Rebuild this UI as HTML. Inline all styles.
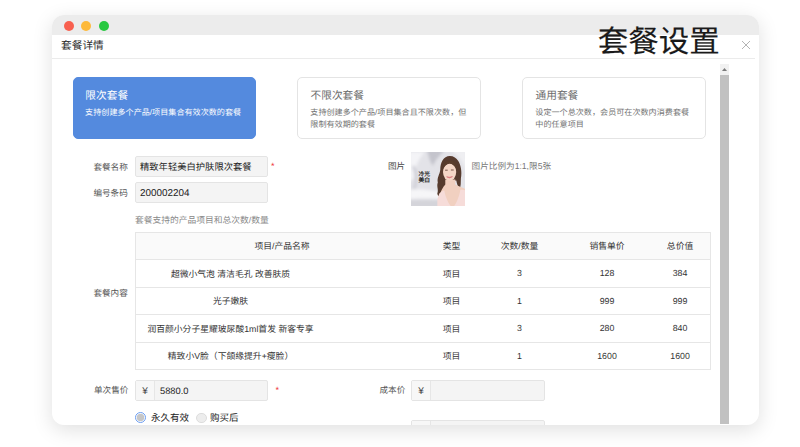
<!DOCTYPE html>
<html lang="zh-CN"><head><meta charset="utf-8">
<style>
*{box-sizing:border-box;margin:0;padding:0}
html,body{text-rendering:geometricPrecision;width:800px;height:447px;overflow:hidden;background:#fff;font-family:"Liberation Sans",sans-serif;color:#333}
.win{position:absolute;left:52px;top:15px;width:707.3px;height:409.6px;background:#fff;border-radius:12px;box-shadow:0 5px 20px rgba(0,0,0,.125);overflow:hidden}
.tb{position:absolute;left:0;top:0;width:100%;height:20px;background:#ececec}
.dot{position:absolute;top:6px;width:10px;height:10px;border-radius:50%}
.abs{position:absolute;white-space:nowrap}
.hdr{position:absolute;left:0;top:20px;width:703px;height:24px;border-bottom:1px solid #ebebeb}
.card{position:absolute;top:62px;height:62px;border-radius:5px;border:1px solid #e4e4e4;background:#fff}
.card h4{position:absolute;left:12.5px;top:9.5px;font-size:10.7px;font-weight:normal;color:#6c6c6c;white-space:nowrap}
.card p{position:absolute;left:12.3px;top:29px;font-size:8.1px;line-height:11.5px;color:#727272;white-space:nowrap}
.card.on{background:#548ade;border-color:#548ade}
.card.on h4,.card.on p{color:#fff;margin-left:-1.2px}
.lbl{position:absolute;margin-left:-1.2px;margin-top:-.5px;font-size:8.6px;color:#555;text-align:right;width:60px;white-space:nowrap}
.inp{position:absolute;height:21px;background:#f4f4f4;border:1px solid #e4e4e4;border-radius:2px;font-size:9.3px;line-height:21px;padding-left:4px;color:#222;white-space:nowrap}
table{position:absolute;left:83px;top:217px;width:575.6px;border-collapse:collapse;font-size:8.8px;color:#333;table-layout:fixed}
td:first-child{padding-right:103px}
td,th{border-top:1px solid #e6e6e6;border-bottom:1px solid #e6e6e6;height:27.45px;padding-bottom:.6px;text-align:center;font-weight:normal;white-space:nowrap}
table{border:1px solid #e6e6e6}
th{background:#fafafa}
</style></head><body>
<div class="win">
 <div class="tb">
  <div class="dot" style="left:12px;background:#f8604f"></div>
  <div class="dot" style="left:29px;background:#fdb93a"></div>
  <div class="dot" style="left:46.5px;background:#28c840"></div>
 </div>
 <div class="hdr"></div>
 <div class="abs" style="left:9px;top:23.2px;font-size:10.7px;color:#2a2a2a">套餐详情</div>
 <div class="abs" style="left:545.7px;top:6.8px;font-size:30.5px;color:#1a1a1a;line-height:40px;-webkit-text-stroke:.12px #1a1a1a">套餐设置</div>
 <svg class="abs" style="left:689px;top:25px" width="10" height="10" viewBox="0 0 10 10"><path d="M1 1L9 9M9 1L1 9" stroke="#b4b4b4" stroke-width="1" fill="none"/></svg>

 <!-- scrollbar -->
 <div class="abs" style="left:668px;top:49px;width:9px;height:360px;background:#f1f1f1"></div>
 <div class="abs" style="left:668px;top:60px;width:9px;height:349px;background:#c1c1c1"></div>
 <svg class="abs" style="left:668px;top:49px" width="9" height="11" viewBox="0 0 9 11"><path d="M2 7L4.5 4L7 7Z" fill="#7a7a7a"/></svg>

 <div class="card on" style="left:21px;width:183px">
   <h4>限次套餐</h4><p>支持创建多个产品/项目集合有效次数的套餐</p></div>
 <div class="card" style="left:245px;width:184px">
   <h4>不限次套餐</h4><p>支持创建多个产品/项目集合且不限次数，但<br>限制有效期的套餐</p></div>
 <div class="card" style="left:470px;width:184px">
   <h4>通用套餐</h4><p>设定一个总次数，会员可在次数内消费套餐<br>中的任意项目</p></div>

 <div class="lbl" style="left:17px;top:146px">套餐名称</div>
 <div class="inp" style="left:83px;top:140.5px;width:133px">精致年轻美白护肤限次套餐</div>
 <div class="abs" style="left:219px;top:146px;font-size:9px;color:#e33">*</div>
 <div class="lbl" style="left:17px;top:172px">编号条码</div>
 <div class="inp" style="left:83px;top:166.8px;width:133px;font-size:9.9px">200002204</div>
 <div class="abs" style="left:83px;top:197.7px;font-size:8.75px;color:#888">套餐支持的产品项目和总次数/数量</div>

 <div class="lbl" style="left:294.3px;top:145.2px;color:#444">图片</div>
 <svg class="abs" style="left:359px;top:137px" width="54" height="54" viewBox="0 0 54 54">
  <defs><filter id="bl" x="-10%" y="-10%" width="120%" height="120%"><feGaussianBlur stdDeviation="0.7"/></filter>
  <filter id="bl2" x="-20%" y="-20%" width="140%" height="140%"><feGaussianBlur stdDeviation="1.6"/></filter>
  <clipPath id="cp"><rect width="54" height="54"/></clipPath></defs>
  <g clip-path="url(#cp)">
  <rect width="54" height="54" fill="#e3e3e8"/>
  <g filter="url(#bl2)">
   <path d="M-2 0H14C8 6 4 14 3 26L-2 30Z" fill="#f4f4f7"/>
   <path d="M16 -2H34C30 2 24 8 22 14C18 8 18 4 16 -2Z" fill="#c4c4cc"/>
   <path d="M40 -2H56V24C54 12 48 4 40 -2Z" fill="#efeff2"/>
   <path d="M-2 38C8 36 18 38 30 40V47C18 46 8 46 -2 47Z" fill="#f6f6f8"/>
   <path d="M-2 48H30V56H-2Z" fill="#d4d4da"/>
   <path d="M2 14C6 20 6 30 3 37" stroke="#d0d0d8" stroke-width="3" fill="none"/>
  </g>
  <g filter="url(#bl)" transform="translate(1.3,1.6)">
   <!-- hair -->
   <path d="M37.5 2.5C31 2.5 28 9 28 16C27.5 21 24.5 24 25.5 29C24 33 26.5 36 25 40C25.5 43.5 29 44.5 31.5 42C33 36 34 31 35 28L44 27C44.5 30 45.5 33 47 35.5C49 32.5 48.3 29 48.6 25C49.8 19 48.8 12 46 7.5C44 4.5 41.5 2.5 37.5 2.5Z" fill="#573b2d"/>
   <!-- neck/chest -->
   <path d="M33 26H43V31C46 33 51 34 54 36V54H27V44C28 38 31 33 33 31Z" fill="#f1d0c0"/>
   <!-- face -->
   <ellipse cx="37.3" cy="18.5" rx="6.6" ry="8.6" fill="#f4d6c6"/>
   <path d="M30.5 16C31 10 35 7 39 7.5C42 8 44 11 44.5 15C42 12 40 10 37 10C34 10.5 32 13 30.5 16Z" fill="#5a3d2d"/>
   <path d="M34.3 23.2Q37 25.6 40.2 23Q37.2 24 34.3 23.2Z" fill="#d9747a" stroke="#d9747a" stroke-width=".6"/>
   <path d="M32.8 16.6h2.6M38.6 16.4h2.8" stroke="#6a4a3c" stroke-width=".9"/>
   <!-- dress -->
   <path d="M27 40C29 38 31 37 32 37C33 43 36 50 39.5 54H25V46Z" fill="#f6dcd9"/>
   <path d="M54 37C51 36 49 36 48 36.5C47 43 44 50 41 54H54Z" fill="#f6dcd9"/>
  </g>
  <g font-family="'Liberation Sans',sans-serif" font-weight="bold" font-size="5.8" fill="#1e1e22"><text x="7.4" y="23.8">冷光</text><text x="7.4" y="29.9">美白</text></g>
  </g>
 </svg>
 <div class="abs" style="left:419.5px;top:144.8px;font-size:8.65px;color:#777">图片比例为1:1,限5张</div>

 <div class="lbl" style="left:17px;top:272px">套餐内容</div>
 <table>
  <colgroup><col style="width:292.5px"><col style="width:47px"><col style="width:89px"><col style="width:86px"><col style="width:60.6px"></colgroup>
  <tr><th>项目/产品名称</th><th>类型</th><th>次数/数量</th><th>销售单价</th><th>总价值</th></tr>
  <tr><td>超微小气泡 清洁毛孔 改善肤质</td><td>项目</td><td>3</td><td>128</td><td>384</td></tr>
  <tr><td>光子嫩肤</td><td>项目</td><td>1</td><td>999</td><td>999</td></tr>
  <tr><td>润百颜小分子星耀玻尿酸1ml首发 新客专享</td><td>项目</td><td>3</td><td>280</td><td>840</td></tr>
  <tr><td>精致小V脸（下颌缘提升+瘦脸）</td><td>项目</td><td>1</td><td>1600</td><td>1600</td></tr>
 </table>

 <div class="lbl" style="left:17.6px;top:369.4px">单次售价</div>
 <div class="inp" style="left:83px;top:364.6px;width:133px;padding-left:0"><span style="display:inline-block;width:19px;text-align:center;background:#f7f7f7;border-right:1px solid #e6e6e6;height:19px;font-size:10px;vertical-align:top;color:#444">¥</span><span style="padding-left:5px">5880.0</span></div>
 <div class="abs" style="left:223.5px;top:370px;font-size:9px;color:#e33">*</div>
 <div class="lbl" style="left:294.5px;top:369.4px">成本价</div>
 <div class="inp" style="left:359px;top:364.6px;width:134px;padding-left:0"><span style="display:inline-block;width:19px;text-align:center;background:#f7f7f7;border-right:1px solid #e6e6e6;height:19px;font-size:10px;vertical-align:top;color:#444">¥</span></div>
 <div class="inp" style="left:359px;top:405px;width:134px;padding-left:0"><span style="display:inline-block;width:19px;text-align:center;background:#f7f7f7;border-right:1px solid #e6e6e6;height:19px;font-size:10px;vertical-align:top;color:#444"></span></div>

 <div class="abs" style="left:82.7px;top:397px;width:11px;height:11px;border-radius:50%;border:1px solid #6a9cf0;background:radial-gradient(circle,#c6c6c6 0 3.4px,#fff 4.2px)"></div>
 <div class="abs" style="left:99px;top:395.2px;font-size:9.5px;color:#222">永久有效</div>
 <div class="abs" style="left:144px;top:397.5px;width:10.5px;height:10.5px;border-radius:50%;border:1px solid #dcdcdc;background:#ededed"></div>
 <div class="abs" style="left:158px;top:395.2px;font-size:9.5px;color:#222">购买后</div>
</div>
</body></html>
